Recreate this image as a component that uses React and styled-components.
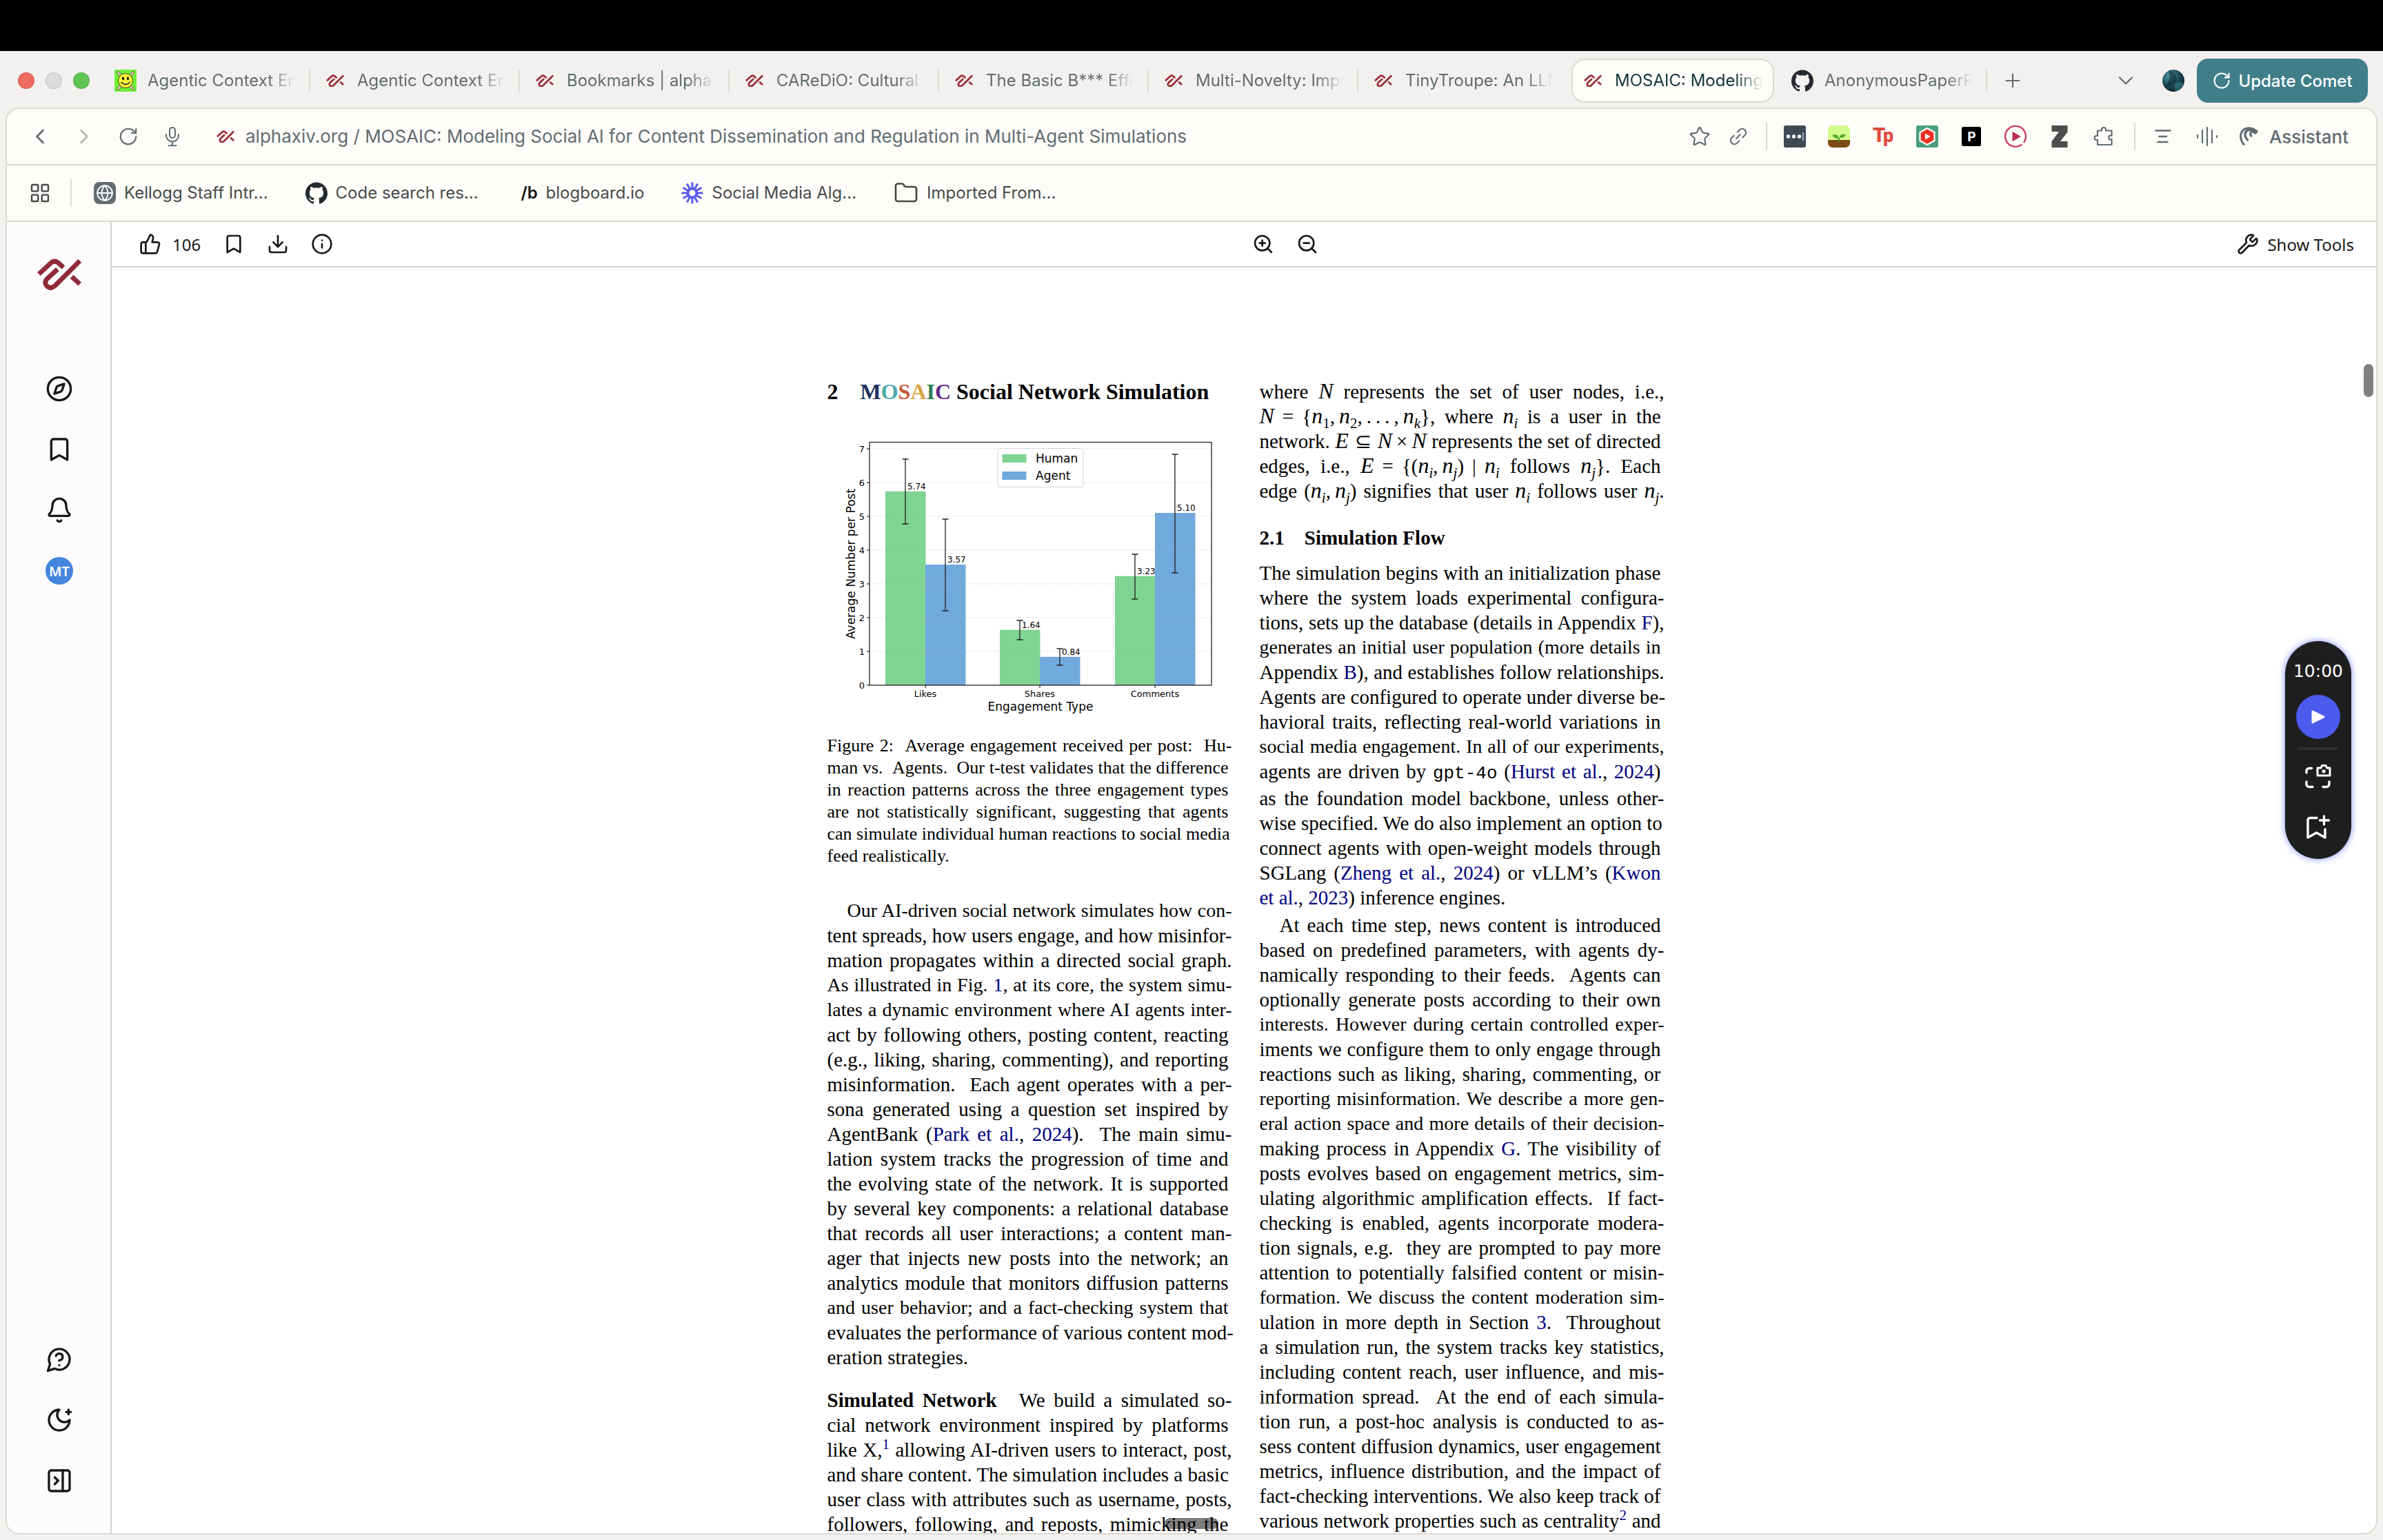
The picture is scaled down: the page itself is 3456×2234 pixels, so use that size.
import React from "react";
import styled, { createGlobalStyle, css } from "styled-components";
import {
  Bell,
  Bookmark,
  ChevronDown,
  ChevronLeft,
  ChevronRight,
  Compass,
  Download,
  Folder,
  Globe,
  Info,
  LayoutGrid,
  Plus,
  RotateCw,
  Star,
  ThumbsUp,
  Wrench,
  ZoomIn,
  ZoomOut,
} from "lucide-react";
import { SiGithub } from "react-icons/si";

const GlobalStyle = createGlobalStyle`
  * {
    box-sizing: border-box;
  }
  body {
    margin: 0;
    background: #f3f1f0;
    font-family: Inter, "Liberation Sans", sans-serif;
    overflow: hidden;
  }
  button {
    border: 0;
    padding: 0;
    background: none;
    font: inherit;
    color: inherit;
  }
  a {
    color: inherit;
    text-decoration: none;
  }
  svg {
    display: block;
    flex-shrink: 0;
  }
`;

/* ---------- window ---------- */

const Window = styled.div`
  display: flex;
  flex-direction: column;
  height: 100vh;
`;

const MenuBar = styled.div`
  height: 74px;
  flex-shrink: 0;
  background: #000;
`;

const TabStrip = styled.header`
  display: flex;
  align-items: center;
  height: 82px;
  flex-shrink: 0;
  padding: 4px 22px 0 26px;
  color: #626c71;
`;

const Lights = styled.div`
  display: flex;
  gap: 16px;
  margin-right: 16px;
`;

const Light = styled.span`
  width: 24px;
  height: 24px;
  border-radius: 50%;
  border: 1px solid rgba(0, 0, 0, 0.12);
  background: ${({ $color }) => $color};
`;

const Tabs = styled.nav`
  display: flex;
  align-items: center;
`;

const Tab = styled.button`
  display: flex;
  align-items: center;
  gap: 16px;
  width: 304px;
  height: 32px;
  padding: 0 20px;
  border-right: 2px solid #dbdad2;
  font-size: 24px;

  ${({ $plain }) =>
    $plain &&
    css`
      border-right-color: transparent;
    `}

  ${({ $active }) =>
    $active &&
    css`
      width: 294px;
      height: 64px;
      margin: 0 5px;
      padding: 0 15px 0 13px;
      border: 2px solid #dbdad2;
      border-radius: 20px;
      background: #fefdf9;
      color: #13343b;
    `}
`;

const TabIcon = styled.span`
  display: flex;
  justify-content: center;
  width: 32px;
  flex-shrink: 0;
`;

const TabTitle = styled.span`
  flex: 1;
  min-width: 0;
  white-space: nowrap;
  text-align: left;
  line-height: 32px;
  mask-image: linear-gradient(to right, #000 82%, transparent);
`;

const StripEnd = styled.div`
  display: flex;
  align-items: center;
  margin-left: auto;
`;

const UpdateButton = styled.button`
  display: flex;
  align-items: center;
  justify-content: center;
  gap: 10px;
  width: 248px;
  height: 64px;
  margin-left: 18px;
  border-radius: 16px;
  background: #407f8a;
  color: #fff;
  font-size: 24px;
  font-weight: 500;
  white-space: nowrap;
`;

const IconButton = styled.button`
  display: flex;
  align-items: center;
  justify-content: center;
  width: ${({ $width = 64 }) => $width}px;
  height: 64px;
  flex-shrink: 0;
  color: ${({ $faded }) => ($faded ? "#b4b7b5" : "inherit")};
`;

const Divider = styled.span`
  width: 2px;
  height: 40px;
  flex-shrink: 0;
  margin: 0 ${({ $right = 8 }) => $right}px 0 12px;
  background: #dbdad2;
`;

const Panel = styled.div`
  display: flex;
  flex-direction: column;
  flex: 1;
  min-height: 0;
  margin: 0 8px 8px;
  border: 2px solid #dbdad2;
  border-radius: 20px;
  background: #fff;
  overflow: hidden;
`;

const AddressBar = styled.div`
  display: flex;
  align-items: center;
  height: 82px;
  flex-shrink: 0;
  padding: 0 40px 0 16px;
  border-bottom: 2px solid #dbdad2;
  background: #fefdf9;
  color: #626c71;
`;

const Address = styled.label`
  display: flex;
  align-items: center;
  gap: 16px;
  flex: 1;
  margin-left: 32px;
`;

const AddressInput = styled.input`
  flex: 1;
  border: 0;
  padding: 0;
  background: none;
  color: inherit;
  font: inherit;
  font-size: 26px;
  line-height: 32px;
  outline: none;
`;

const Assistant = styled.button`
  display: flex;
  align-items: center;
  gap: 16px;
  margin-left: 14px;
  font-size: 26px;
  font-weight: 500;
`;

const BookmarksBar = styled.nav`
  display: flex;
  align-items: center;
  height: 82px;
  flex-shrink: 0;
  padding: 0 16px;
  border-bottom: 2px solid #dbdad2;
  background: #fefdf9;
  color: #484b4a;
`;

const BookmarkLinks = styled.div`
  display: flex;
  gap: 54px;
`;

const BookmarkLink = styled.a`
  display: flex;
  align-items: center;
  gap: 12px;
  font-size: 24px;
  line-height: 32px;
  white-space: nowrap;
`;

const GlobeTile = styled.span`
  display: grid;
  place-items: center;
  width: 32px;
  height: 32px;
  border-radius: 8px;
  background: #626c71;
  color: #fff;
`;

const SlashB = styled.span`
  width: 32px;
  text-align: right;
  color: #111;
  font-weight: 600;
`;

/* ---------- app ---------- */

const Body = styled.div`
  position: relative;
  display: flex;
  flex: 1;
  min-height: 0;
`;

const Sidebar = styled.aside`
  display: flex;
  flex-direction: column;
  align-items: center;
  width: 152px;
  flex-shrink: 0;
  padding: 53px 0 56px 2px;
  border-right: 2px solid #d4d4d6;
  background: #fdfbfd;
  color: #18181a;
`;

const SideGroup = styled.div`
  display: flex;
  flex-direction: column;
  gap: 48px;
  margin-top: ${({ $bottom }) => ($bottom ? "auto" : "123px")};
`;

const Avatar = styled.button`
  width: 40px;
  height: 40px;
  border-radius: 50%;
  background: #4486dd;
  color: #fff;
  font-family: "Noto Sans", sans-serif;
  font-size: 20px;
  font-weight: 600;
`;

const Main = styled.main`
  display: flex;
  flex-direction: column;
  flex: 1;
  min-width: 0;
`;

const Toolbar = styled.div`
  display: flex;
  align-items: center;
  justify-content: space-between;
  height: 66px;
  flex-shrink: 0;
  padding: 0 32px 0 40px;
  border-bottom: 2px solid #d4d4d6;
  color: #18181a;
  font-family: "Noto Sans", sans-serif;
  font-size: 24px;
`;

const ToolGroup = styled.div`
  display: flex;
  align-items: center;
  gap: 32px;
`;

const ToolButton = styled.button`
  display: flex;
  align-items: center;
  gap: ${({ $gap = 12 }) => $gap}px;
`;

const Viewer = styled.div`
  flex: 1;
  min-height: 0;
  overflow: hidden;
`;

const Page = styled.article`
  display: grid;
  grid-template-columns: 582px 582px;
  justify-content: center;
  gap: 45px;
  padding-top: 162px;
  color: #000;
  font-family: "Liberation Serif", "Times New Roman", serif;
  font-size: 29px;
  line-height: 36px;
`;

const Column = styled.section`
  min-width: 0;
`;

const SectionTitle = styled.h2`
  display: flex;
  gap: 32px;
  margin: 0 0 45px;
  font-size: 32px;
  line-height: 36px;
`;

const SubTitle = styled.h3`
  display: flex;
  gap: 29px;
  margin: 32px 0 15px;
  font-size: 29px;
  line-height: 36px;
`;

const Letter = styled.span`
  color: ${({ $color }) => $color};
`;

const Figure = styled.figure`
  margin: 0 0 45px;
`;

const Caption = styled.figcaption`
  margin-top: 25px;
  font-size: 26px;
  line-height: 32px;
`;

const Paragraph = styled.p`
  margin: ${({ $top = 0 }) => $top}px 0 0;
`;

// Punctuation at the line end hangs a little into the margin.
const Line = styled.span`
  display: block;
  white-space: nowrap;
  text-align: justify;
  text-align-last: ${({ $last }) => ($last ? "left" : "justify")};
  margin-right: ${({ $hang }) => ($hang ? "-5px" : "0")};
  padding-left: ${({ $indent }) => ($indent ? "29px" : "0")};
  font-size: ${({ $tight }) => ($tight ? "28px" : "inherit")};
`;

const Cite = styled.a`
  color: #00007f;
`;

const Sup = styled.sup`
  font-size: 21px;
  line-height: 0;
`;

const Sub = styled.sub`
  font-size: 21px;
  line-height: 0;
`;

const Code = styled.code`
  font-family: "Liberation Mono", monospace;
  font-size: 26px;
`;

const RunIn = styled.strong`
  margin-right: 20px;
`;

const Formula = styled.span`
  white-space: nowrap;
`;

const Var = styled.i`
  font-size: 32px;
  line-height: 0;
`;

const Rel = styled.span`
  margin: 0 ${({ $space = 9 }) => $space}px;
`;

const Comma = styled.span`
  margin-right: 6px;
`;

const VerticalThumb = styled.span`
  position: absolute;
  top: 206px;
  right: 4px;
  width: 14px;
  height: 48px;
  border-radius: 7px;
  background: #808080;
`;

const HorizontalThumb = styled.span`
  position: absolute;
  bottom: 6px;
  left: calc(50% - 39px);
  width: 78px;
  height: 16px;
  border-radius: 8px;
  background: rgba(0, 0, 0, 0.5);
`;

const Timer = styled.aside`
  position: absolute;
  top: 608px;
  right: 36px;
  display: flex;
  flex-direction: column;
  align-items: center;
  width: 96px;
  padding: 28px 0;
  border-radius: 48px;
  background: #1e1e1e;
  box-shadow: 0 0 8px 1px rgba(76, 90, 240, 0.6);
  color: #fff;
`;

const TimerText = styled.span`
  font-family: "DejaVu Sans", sans-serif;
  font-size: 25px;
  line-height: 32px;
`;

const PlayButton = styled.button`
  display: grid;
  place-items: center;
  width: 64px;
  height: 64px;
  margin-top: 18px;
  border-radius: 50%;
  background: #4c5aee;
`;

const TimerRule = styled.span`
  width: 58px;
  height: 4px;
  margin: 12px 0 20px;
  border-radius: 2px;
  background: #2f2f2f;
`;

const TimerTools = styled.div`
  display: flex;
  flex-direction: column;
  align-items: center;
  gap: 38px;
`;

/* ---------- drawings ---------- */

function AlphaLogo({ width = 26, color = "#9a2f36" }) {
  return (
    <svg width={width} viewBox="0 0 64 46" fill="none" stroke={color} strokeWidth="6.8">
      <path d="M2.4 22.6 19 7.2Q24.6 1.4 30.8 6.4L38 13" />
      <path d="M29.5 15.6 15 28.6Q9.6 34 13.4 39.2 19 45.4 26 39.2L61.8 3.4" />
      <path d="M50 26.4 61.8 37" />
    </svg>
  );
}

function Smiley() {
  return (
    <svg width="32" height="32" viewBox="0 0 32 32">
      <rect width="32" height="32" fill="#6ff03c" />
      <path d="M5 4 27 28M27 4 5 28" stroke="#6b5a3a" strokeWidth="4" strokeLinecap="round" />
      <path d="M5 4 27 28M27 4 5 28" stroke="#f1dcb8" strokeWidth="2" strokeLinecap="round" />
      <circle cx="16" cy="16" r="10.5" fill="#fbf236" stroke="#4a4510" strokeWidth="1" />
      <ellipse cx="12.5" cy="13" rx="1.4" ry="2.4" />
      <ellipse cx="19.5" cy="13" rx="1.4" ry="2.4" />
      <path d="M9.5 18q6.5 7 13 0" fill="none" stroke="#222" strokeWidth="1.4" />
    </svg>
  );
}

function Orb() {
  return (
    <svg width="32" height="32" viewBox="0 0 32 32">
      <defs>
        <radialGradient id="orb" cx="0.35" cy="0.3" r="0.8">
          <stop offset="0" stopColor="#4f9fae" />
          <stop offset="0.55" stopColor="#1d4753" />
          <stop offset="1" stopColor="#0a1a22" />
        </radialGradient>
      </defs>
      <circle cx="16" cy="16" r="16" fill="url(#orb)" />
      <path d="M10 1q14 6 10 18L4 26q8-10 6-25z" fill="#0b1f28" opacity="0.55" />
      <path d="M20 19q6-2 11 1-3 9-12 12-3-8 1-13z" fill="#3b7e8d" opacity="0.6" />
    </svg>
  );
}

function MicIcon() {
  return (
    <svg width="30" height="30" viewBox="0 0 24 24" fill="none" stroke="currentColor" strokeWidth="1.6" strokeLinecap="round">
      <rect x="8.8" y="1.5" width="6.4" height="12" rx="3.2" />
      <path d="M4.8 9.5v1.2a7.2 7.2 0 0 0 14.4 0V9.5M12 18v4.5M7.5 22.5h9" />
    </svg>
  );
}

function LinkIcon() {
  return (
    <svg width="28" height="28" viewBox="0 0 24 24" fill="none" stroke="currentColor" strokeWidth="1.8" strokeLinecap="round">
      <path d="M9.5 14.5l5-5M11 6.5l2.8-2.8a4.6 4.6 0 0 1 6.5 6.5L17.5 13M13 17.5l-2.8 2.8a4.6 4.6 0 0 1-6.5-6.5L6.5 11" />
    </svg>
  );
}

function Burst() {
  const rays = Array.from({ length: 12 }, (_, i) => i * 30);
  return (
    <svg width="32" height="32" viewBox="0 0 32 32" stroke="#5b5bf0" fill="none">
      <circle cx="16" cy="16" r="6.5" strokeWidth="4" />
      {rays.map((a) => (
        <path key={a} d="M16 9V0.5" strokeWidth="3" transform={`rotate(${a} 16 16)`} />
      ))}
    </svg>
  );
}

function DotsExt() {
  return (
    <svg width="32" height="32" viewBox="0 0 32 32">
      <rect width="32" height="32" rx="3" fill="#3e4a54" />
      <circle cx="6.5" cy="16" r="2.7" fill="#fff" />
      <circle cx="14.5" cy="16" r="2.7" fill="#fff" />
      <circle cx="22.5" cy="16" r="2.7" fill="#fff" />
      <path d="M28 10v12" stroke="#c9ced2" strokeWidth="1.5" />
    </svg>
  );
}

function PlantExt() {
  return (
    <svg width="32" height="32" viewBox="0 0 32 32">
      <rect width="32" height="32" rx="7" fill="#d5fb8c" />
      <path d="M0 21h32v4a7 7 0 0 1-7 7H7a7 7 0 0 1-7-7z" fill="#7b4b14" />
      <path d="M16 24v-6" stroke="#3f8a1e" strokeWidth="1.6" />
      <path d="M16 19q-9 0-9-6 8-1 9 6zM16.5 18q0-6 9-5 0 5-9 5z" fill="#55a630" />
    </svg>
  );
}

function TpExt() {
  return (
    <svg width="32" height="32" viewBox="0 0 32 32" fill="#e04a3f" fontFamily="Roboto, sans-serif" fontWeight="900">
      <text x="1" y="24" fontSize="29">
        T
      </text>
      <text x="16" y="24" fontSize="27">
        p
      </text>
    </svg>
  );
}

function HexExt() {
  return (
    <svg width="32" height="32" viewBox="0 0 32 32">
      <rect width="32" height="32" rx="3" fill="#4a9f7f" />
      <path d="M16 4 26.5 10v12L16 28 5.5 22V10z" fill="#ee3124" stroke="#fff" strokeWidth="2.2" />
      <path d="M13 11.5v9l7.5-4.5z" fill="#fff" />
    </svg>
  );
}

function PExt() {
  return (
    <svg width="28" height="28" viewBox="0 0 28 28">
      <rect width="28" height="28" rx="2.5" />
      <text x="14.5" y="21" textAnchor="middle" fill="#fff" fontFamily="Inter, sans-serif" fontWeight="700" fontSize="19">
        P
      </text>
    </svg>
  );
}

function PlayExt() {
  return (
    <svg width="32" height="32" viewBox="0 0 32 32" fill="none">
      <path d="M24.6 28A14.9 14.9 0 1 1 28.5 24" stroke="#c93a5c" strokeWidth="2.3" strokeLinecap="round" />
      <path d="M12 9.5v13L23 16z" fill="#b8324f" stroke="#b8324f" strokeLinejoin="round" />
    </svg>
  );
}

function ZExt() {
  return (
    <svg width="24" height="32" viewBox="0 0 24 32">
      <path d="M.5 0h23v9.5L13 23h10.5v9H.5v-9L11 9H.5z" fill="#4d4d4d" />
    </svg>
  );
}

function PuzzleIcon() {
  return (
    <svg width="30" height="30" viewBox="0 0 30 30" fill="none" stroke="currentColor" strokeWidth="2.2" strokeLinejoin="round">
      <path d="M6 6.500h6V5a3 3 0 0 1 6 0v1.500h8.500v7.200H25a2.800 2.800 0 0 0 0 5.600h1.500V27H6v-7H4.500a3 3 0 0 1 0-6H6z" />
    </svg>
  );
}

function ListIcon() {
  return (
    <svg width="24" height="22" viewBox="0 0 24 22" stroke="currentColor" strokeWidth="2.3">
      <path d="M.5 2.5h23M5.5 11H18M3.5 19h16" />
    </svg>
  );
}

function WaveIcon() {
  return (
    <svg width="32" height="30" viewBox="0 0 32 30" stroke="currentColor" strokeWidth="2.2" strokeLinecap="round">
      <path d="M2 13v4M9 6v18M16 2v26M23 6v18M30 14v2" />
    </svg>
  );
}

function AssistantIcon() {
  return (
    <svg width="28" height="28" viewBox="0 0 28 28" fill="none" stroke="currentColor" strokeLinecap="round">
      <path d="M7 25.5C.5 17 1 6 10 2.5q8-2.5 16 4" strokeWidth="3" />
      <path d="M12.5 19C6.5 12 9 6 14 4.5q6-1 11 3.500" strokeWidth="3.4" />
      <path d="M18 13q-3-3 0-5.5 3-1.5 6 1.5" strokeWidth="3.2" />
    </svg>
  );
}

function OutlineIcon({ children }) {
  return (
    <svg
      width="40"
      height="40"
      viewBox="0 0 24 24"
      fill="none"
      stroke="currentColor"
      strokeWidth="2"
      strokeLinecap="round"
      strokeLinejoin="round"
    >
      {children}
    </svg>
  );
}

function CaptureIcon() {
  return (
    <svg width="38" height="36" viewBox="0 0 38 36" fill="none" stroke="currentColor" strokeWidth="3.4" strokeLinecap="round" strokeLinejoin="round">
      <path d="M9.5 6.5H6a4 4 0 0 0-4 4V13M2 26v3.5a4 4 0 0 0 4 4h5M26 33.500h5a4 4 0 0 0 4-4V26" />
      <path d="M20 6h3l1.500-3.500H30L31.500 6H36v11H18V6z" strokeWidth="3" />
      <circle cx="27" cy="10.8" r="2.6" fill="currentColor" stroke="none" />
    </svg>
  );
}

function BookmarkPlusIcon() {
  return (
    <svg width="34" height="36" viewBox="0 0 34 36" fill="none" stroke="currentColor" strokeWidth="3.4" strokeLinecap="round" strokeLinejoin="round">
      <path d="M15 4.5H5a3 3 0 0 0-3 3V33l12.5-7L27 33V21" />
      <path d="M25.5 2v12M19.5 8h13" />
    </svg>
  );
}

const BARS = [
  { x: 84, value: "5.74", low: 129, high: 35 },
  { x: 142, value: "3.57", low: 255, high: 122, agent: true },
  { x: 250, value: "1.64", low: 297, high: 269 },
  { x: 308, value: "0.84", low: 334, high: 310, agent: true },
  { x: 417, value: "3.23", low: 238, high: 173 },
  { x: 475, value: "5.10", low: 200, high: 28, agent: true },
];

const GROUPS = [
  { x: 142, name: "Likes" },
  { x: 308, name: "Shares" },
  { x: 475, name: "Comments" },
];

const GREEN = "#7fd494";
const BLUE = "#70a9dc";

function EngagementChart() {
  const y = (v) => 363 - v * 49;
  return (
    <svg width="582" height="410" viewBox="0 0 582 410" fontFamily="DejaVu Sans, sans-serif" fontSize="13">
      {BARS.map((b) => (
        <rect key={b.x} x={b.x} y={y(b.value)} width="58.5" height={363 - y(b.value)} fill={b.agent ? BLUE : GREEN} />
      ))}
      {[0, 1, 2, 3, 4, 5, 6, 7].map((v) => (
        <g key={v}>
          {v > 0 && <path d={`M61 ${y(v)}H557`} stroke="#b0b0b0" strokeOpacity="0.35" strokeDasharray="3.5 1.5" />}
          <path d={`M57 ${y(v)}h4`} stroke="#000" />
          <text x="54" y={y(v) + 5} textAnchor="end">
            {v}
          </text>
        </g>
      ))}
      {BARS.map((b) => {
        const mid = b.x + 29;
        return (
          <g key={b.x}>
            <path d={`M${mid} ${b.low}V${b.high}M${mid - 4.5} ${b.low}h9M${mid - 4.5} ${b.high}h9`} stroke="#222" strokeWidth="1.3" fill="none" />
            <text x={mid + 3} y={y(b.value) - 3} fontSize="12">
              {b.value}
            </text>
          </g>
        );
      })}
      <rect x="61" y="10.5" width="496" height="352.5" fill="none" stroke="#222" strokeWidth="1.3" />
      {GROUPS.map((g) => (
        <g key={g.name}>
          <path d={`M${g.x} 363v4`} stroke="#000" />
          <text x={g.x} y="380" textAnchor="middle">
            {g.name}
          </text>
        </g>
      ))}
      <rect x="247" y="19.5" width="124" height="56" rx="3" fill="#fff" fillOpacity="0.8" stroke="#d6d6d6" />
      <rect x="253.5" y="28" width="35" height="12" fill={GREEN} />
      <rect x="253.5" y="53" width="35" height="12" fill={BLUE} />
      <g fontSize="17">
        <text x="302" y="40">Human</text>
        <text x="302" y="65">Agent</text>
        <text x="309" y="400" textAnchor="middle">Engagement Type</text>
        <text transform="translate(39.5 187) rotate(-90)" textAnchor="middle">Average Number per Post</text>
      </g>
    </svg>
  );
}

/* ---------- text ---------- */

// "[...]" marks a reference inside a line of text.
function withCites(text) {
  return text.split(/(\[.*?\])/).map((part, i) =>
    part[0] === "[" ? (
      <Cite key={i} href="#ref">
        {part.slice(1, -1)}
      </Cite>
    ) : (
      part
    )
  );
}

// The last piece of plain text in a line, to see if it ends in punctuation.
function tailOf(line) {
  return typeof line === "string" ? line : [].concat(line.props.children).at(-1);
}

// A leading "~" marks a full line, set one size tighter.
function Lines({ lines, indent, open }) {
  return lines.map((line, i) => (
    <Line
      key={i}
      $indent={indent && i === 0}
      $last={!open && i === lines.length - 1}
      $hang={/[-.,]$/.test(tailOf(line))}
      $tight={line[0] === "~"}
    >
      {typeof line === "string" ? withCites(line.replace("~", "")) : line}
    </Line>
  ));
}

const Node = ({ i }) => (
  <>
    <Var>n</Var>
    <Sub>{isNaN(i) ? <i>{i}</i> : i}</Sub>
  </>
);

const CAPTION = [
  "Figure 2: \u00a0Average engagement received per post: \u00a0Hu-",
  "man vs. \u00a0Agents. \u00a0Our t-test validates that the difference",
  "in reaction patterns across the three engagement types",
  "are not statistically significant, suggesting that agents",
  "can simulate individual human reactions to social media",
  "feed realistically.",
];

const OVERVIEW = [
  "~Our AI-driven social network simulates how con-",
  "tent spreads, how users engage, and how misinfor-",
  "mation propagates within a directed social graph.",
  "~As illustrated in Fig. [1], at its core, the system simu-",
  "~lates a dynamic environment where AI agents inter-",
  "act by following others, posting content, reacting",
  "(e.g., liking, sharing, commenting), and reporting",
  "misinformation. \u00a0Each agent operates with a per-",
  "sona generated using a question set inspired by",
  "AgentBank ([Park et al.], [2024]). \u00a0The main simu-",
  "lation system tracks the progression of time and",
  "the evolving state of the network. It is supported",
  "by several key components: a relational database",
  "that records all user interactions; a content man-",
  "ager that injects new posts into the network; an",
  "analytics module that monitors diffusion patterns",
  "~and user behavior; and a fact-checking system that",
  "evaluates the performance of various content mod-",
  "eration strategies.",
];

const NETWORK = [
  <>
    <RunIn>Simulated Network</RunIn> We build a simulated so-
  </>,
  "cial network environment inspired by platforms",
  <>
    like X,
    <Sup>
      <Cite href="#fn1">1</Cite>
    </Sup>{" "}
    allowing AI-driven users to interact, post,
  </>,
  "and share content. The simulation includes a basic",
  "user class with attributes such as username, posts,",
  "followers, following, and reposts, mimicking the",
];

const NODES = [
  <>
    where <Var>N</Var> represents the set of user nodes, i.e.,
  </>,
  <>
    <Formula>
      <Var>N</Var>
      <Rel $space={12}>=</Rel>
      {"{"}
      <Node i={1} />
      <Comma>,</Comma>
      <Node i={2} />
      <Comma>,</Comma>
      <Comma>.</Comma>
      <Comma>.</Comma>
      <Comma>.</Comma>
      <Comma>,</Comma>
      <Node i="k" />
      {"}"},
    </Formula>{" "}
    where <Node i="i" /> is a user in the
  </>,
  <>
    network.{" "}
    <Formula>
      <Var>E</Var>
      <Rel>⊆</Rel>
      <Var>N</Var>
      <Rel $space={6}>×</Rel>
      <Var>N</Var>
    </Formula>{" "}
    represents the set of directed
  </>,
  <>
    edges, i.e.,{" "}
    <Formula>
      <Var>E</Var>
      <Rel $space={12}>=</Rel>
      {"{("}
      <Node i="i" />
      <Comma>,</Comma>
      <Node i="j" />)<Rel $space={12}>|</Rel>
      <Node i="i" />
    </Formula>{" "}
    follows <Node i="j" />
    {"}"}. Each
  </>,
  <>
    edge (<Node i="i" />
    <Comma>,</Comma>
    <Node i="j" />) signifies that user <Node i="i" /> follows user <Node i="j" />.
  </>,
];

const FLOW = [
  "The simulation begins with an initialization phase",
  "where the system loads experimental configura-",
  "tions, sets up the database (details in Appendix [F]),",
  "~generates an initial user population (more details in",
  "Appendix [B]), and establishes follow relationships.",
  "Agents are configured to operate under diverse be-",
  "havioral traits, reflecting real-world variations in",
  "~social media engagement. In all of our experiments,",
  <>
    agents are driven by <Code>gpt-4o</Code> {withCites("([Hurst et al.], [2024])")}
  </>,
  "as the foundation model backbone, unless other-",
  "wise specified. We do also implement an option to",
  "connect agents with open-weight models through",
  "SGLang ([Zheng et al.], [2024]) or vLLM’s ([Kwon]",
  "[et al.], [2023]) inference engines.",
];

const STEPS = [
  "At each time step, news content is introduced",
  "based on predefined parameters, with agents dy-",
  "namically responding to their feeds. \u00a0Agents can",
  "optionally generate posts according to their own",
  "~interests. However during certain controlled exper-",
  "iments we configure them to only engage through",
  "reactions such as liking, sharing, commenting, or",
  "~reporting misinformation. We describe a more gen-",
  "~eral action space and more details of their decision-",
  "making process in Appendix [G]. The visibility of",
  "posts evolves based on engagement metrics, sim-",
  "ulating algorithmic amplification effects. \u00a0If fact-",
  "checking is enabled, agents incorporate modera-",
  "tion signals, e.g. \u00a0they are prompted to pay more",
  "attention to potentially falsified content or misin-",
  "~formation. We discuss the content moderation sim-",
  "ulation in more depth in Section [3]. \u00a0Throughout",
  "a simulation run, the system tracks key statistics,",
  "including content reach, user influence, and mis-",
  "information spread. \u00a0At the end of each simula-",
  "tion run, a post-hoc analysis is conducted to as-",
  "sess content diffusion dynamics, user engagement",
  "metrics, influence distribution, and the impact of",
  "fact-checking interventions. We also keep track of",
  <>
    various network properties such as centrality
    <Sup>
      <Cite href="#fn2">2</Cite>
    </Sup>{" "}
    and
  </>,
];

const TABS = [
  { title: "Agentic Context En", icon: <Smiley /> },
  { title: "Agentic Context En" },
  { title: "Bookmarks | alphaX" },
  { title: "CAReDiO: Cultural" },
  { title: "The Basic B*** Effe" },
  { title: "Multi-Novelty: Impr" },
  { title: "TinyTroupe: An LLM", plain: true },
  { title: "MOSAIC: Modeling", active: true },
  { title: "AnonymousPaperR", icon: <SiGithub size={32} color="#24292f" /> },
];

const MOSAIC = [
  ["M", "#22335e"],
  ["O", "#4ba8a6"],
  ["S", "#c4573a"],
  ["A", "#dba443"],
  ["I", "#2f7d5b"],
  ["C", "#642f86"],
];

export default function App() {
  return (
    <Window>
      <GlobalStyle />
      <MenuBar />
      <TabStrip>
        <Lights>
          <Light $color="#ec6a5e" />
          <Light $color="#dddcdb" />
          <Light $color="#61c554" />
        </Lights>
        <Tabs>
          {TABS.map(({ title, icon, active, plain }, i) => (
            <Tab key={i} $active={active} $plain={plain}>
              <TabIcon>{icon || <AlphaLogo />}</TabIcon>
              <TabTitle>{title}</TabTitle>
            </Tab>
          ))}
        </Tabs>
        <IconButton $width={74} aria-label="New tab">
          <Plus size={32} strokeWidth={1.6} />
        </IconButton>
        <StripEnd>
          <IconButton $width={106} aria-label="Search tabs">
            <ChevronDown size={36} strokeWidth={1.6} />
          </IconButton>
          <Orb />
          <UpdateButton>
            <RotateCw size={28} strokeWidth={1.8} />
            Update Comet
          </UpdateButton>
        </StripEnd>
      </TabStrip>

      <Panel>
        <AddressBar>
          <IconButton aria-label="Back">
            <ChevronLeft size={36} strokeWidth={1.8} />
          </IconButton>
          <IconButton $faded aria-label="Forward">
            <ChevronRight size={36} strokeWidth={1.8} />
          </IconButton>
          <IconButton aria-label="Reload">
            <RotateCw size={30} strokeWidth={1.7} />
          </IconButton>
          <IconButton aria-label="Voice">
            <MicIcon />
          </IconButton>
          <Address>
            <AlphaLogo />
            <AddressInput
              aria-label="Address"
              defaultValue="alphaxiv.org / MOSAIC: Modeling Social AI for Content Dissemination and Regulation in Multi-Agent Simulations"
            />
          </Address>
          <IconButton $width={56} aria-label="Favourite">
            <Star size={32} strokeWidth={1.6} />
          </IconButton>
          <IconButton $width={56} aria-label="Copy link">
            <LinkIcon />
          </IconButton>
          <Divider />
          {[DotsExt, PlantExt, TpExt, HexExt, PExt, PlayExt, ZExt, PuzzleIcon].map((Icon, i) => (
            <IconButton key={i} aria-label="Extension">
              <Icon />
            </IconButton>
          ))}
          <Divider />
          <IconButton aria-label="Summarize">
            <ListIcon />
          </IconButton>
          <IconButton aria-label="Voice mode">
            <WaveIcon />
          </IconButton>
          <Assistant>
            <AssistantIcon />
            Assistant
          </Assistant>
        </AddressBar>

        <BookmarksBar>
          <IconButton aria-label="Apps">
            <LayoutGrid size={32} strokeWidth={1.8} />
          </IconButton>
          <Divider $right={32} />
          <BookmarkLinks>
            <BookmarkLink href="#kellogg">
              <GlobeTile>
                <Globe size={26} strokeWidth={1.8} />
              </GlobeTile>
              Kellogg Staff Intr...
            </BookmarkLink>
            <BookmarkLink href="#code">
              <SiGithub size={32} color="#24292f" />
              Code search res...
            </BookmarkLink>
            <BookmarkLink href="#blogboard">
              <SlashB>/b</SlashB>
              blogboard.io
            </BookmarkLink>
            <BookmarkLink href="#social">
              <Burst />
              Social Media Alg...
            </BookmarkLink>
            <BookmarkLink href="#imported">
              <Folder size={36} strokeWidth={1.8} />
              Imported From...
            </BookmarkLink>
          </BookmarkLinks>
        </BookmarksBar>

        <Body>
          <Sidebar>
            <AlphaLogo width={64} color="#8f2b38" />
            <SideGroup>
              <button aria-label="Explore">
                <Compass size={40} />
              </button>
              <button aria-label="Bookmarks">
                <Bookmark size={40} />
              </button>
              <button aria-label="Notifications">
                <Bell size={40} />
              </button>
              <Avatar>MT</Avatar>
            </SideGroup>
            <SideGroup $bottom>
              <button aria-label="Help">
                <OutlineIcon>
                  <path d="M7.9 20A9 9 0 1 0 4 16.1L2 22Z" />
                  <path d="M9.09 9a3 3 0 0 1 5.83 1c0 2-3 3-3 3M12 17h.01" />
                </OutlineIcon>
              </button>
              <button aria-label="Dark mode">
                <OutlineIcon>
                  <path d="M12 3a6 6 0 0 0 9 9 9 9 0 1 1-9-9" />
                  <path d="M20 3v4M22 5h-4" />
                </OutlineIcon>
              </button>
              <button aria-label="Toggle panel">
                <OutlineIcon>
                  <rect x="3" y="3" width="18" height="18" rx="2" />
                  <path d="M15 3v18M8 9l3 3-3 3" />
                </OutlineIcon>
              </button>
            </SideGroup>
          </Sidebar>

          <Main>
            <Toolbar>
              <ToolGroup>
                <ToolButton $gap={16}>
                  <ThumbsUp size={32} />
                  106
                </ToolButton>
                <ToolButton aria-label="Bookmark">
                  <Bookmark size={32} />
                </ToolButton>
                <ToolButton aria-label="Download">
                  <Download size={32} />
                </ToolButton>
                <ToolButton aria-label="Info">
                  <Info size={32} />
                </ToolButton>
              </ToolGroup>
              <ToolGroup>
                <ToolButton aria-label="Zoom in">
                  <ZoomIn size={32} />
                </ToolButton>
                <ToolButton aria-label="Zoom out">
                  <ZoomOut size={32} />
                </ToolButton>
              </ToolGroup>
              <ToolButton>
                <Wrench size={32} />
                Show Tools
              </ToolButton>
            </Toolbar>

            <Viewer>
              <Page>
                <Column>
                  <SectionTitle>
                    <span>2</span>
                    <span>
                      {MOSAIC.map(([letter, color]) => (
                        <Letter key={letter} $color={color}>
                          {letter}
                        </Letter>
                      ))}{" "}
                      Social Network Simulation
                    </span>
                  </SectionTitle>
                  <Figure>
                    <EngagementChart />
                    <Caption>
                      <Lines lines={CAPTION} />
                    </Caption>
                  </Figure>
                  <Paragraph>
                    <Lines lines={OVERVIEW} indent />
                  </Paragraph>
                  <Paragraph $top={26}>
                    <Lines lines={NETWORK} open />
                  </Paragraph>
                </Column>
                <Column>
                  <Paragraph>
                    <Lines lines={NODES} open />
                  </Paragraph>
                  <SubTitle>
                    <span>2.1</span>
                    <span>Simulation Flow</span>
                  </SubTitle>
                  <Paragraph>
                    <Lines lines={FLOW} />
                  </Paragraph>
                  <Paragraph $top={4}>
                    <Lines lines={STEPS} indent open />
                  </Paragraph>
                </Column>
              </Page>
            </Viewer>
          </Main>

          <VerticalThumb />
          <HorizontalThumb />
          <Timer>
            <TimerText>10:00</TimerText>
            <PlayButton aria-label="Start">
              <svg width="22" height="24" viewBox="0 0 22 24">
                <path d="M3 4v16l16-8z" fill="#fff" stroke="#fff" strokeWidth="3" strokeLinejoin="round" />
              </svg>
            </PlayButton>
            <TimerRule />
            <TimerTools>
              <button aria-label="Capture">
                <CaptureIcon />
              </button>
              <button aria-label="Save">
                <BookmarkPlusIcon />
              </button>
            </TimerTools>
          </Timer>
        </Body>
      </Panel>
    </Window>
  );
}
